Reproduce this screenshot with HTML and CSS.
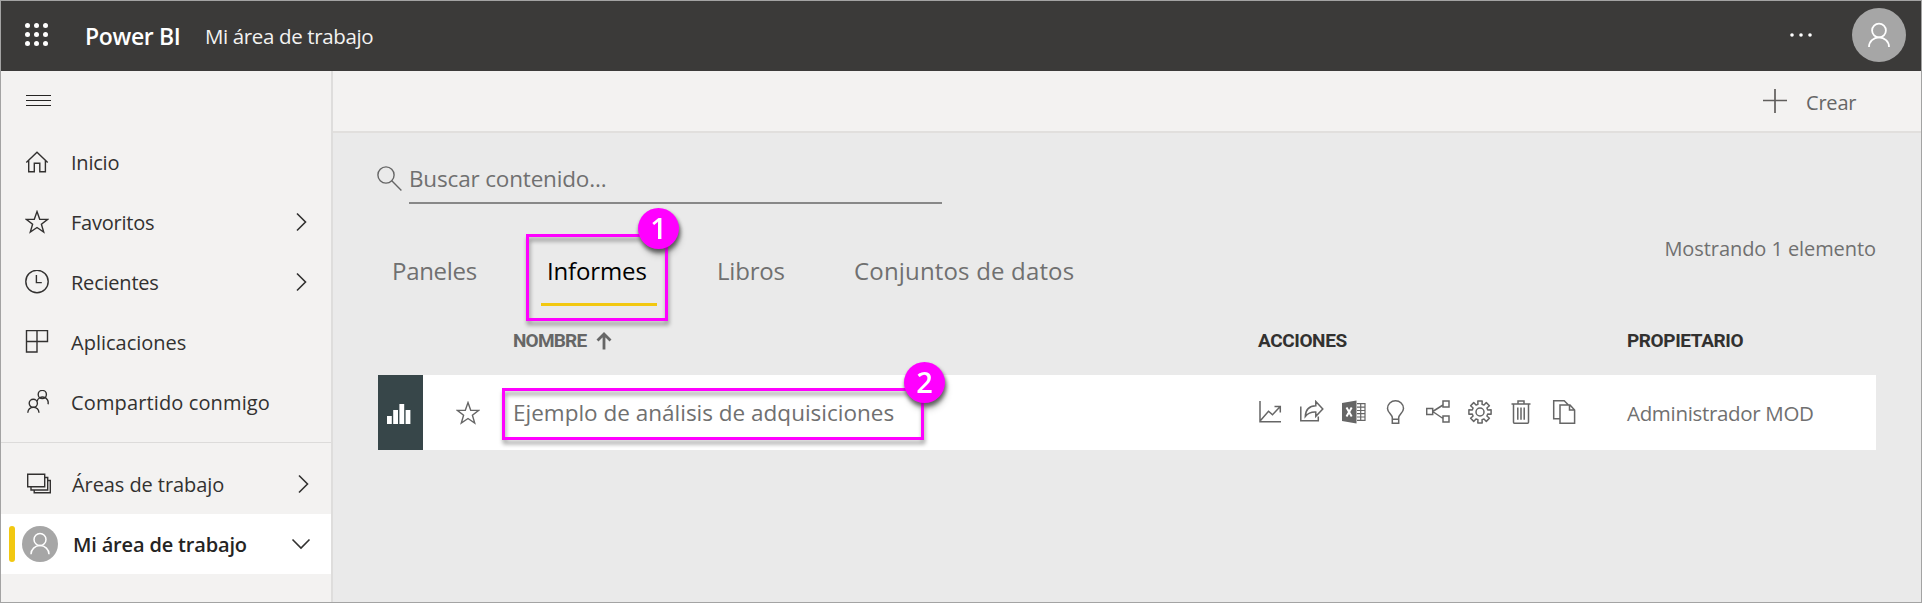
FILE: index.html
```html
<!DOCTYPE html>
<html lang="es">
<head>
<meta charset="utf-8">
<title>Power BI</title>
<link rel="stylesheet" href="styles.css">
</head>
<body>
<div class="app">
  <header class="topbar">
    <svg class="waffle" width="24" height="24" viewBox="0 0 24 24"><g fill="#fff"><circle cx="2.500" cy="2.500" r="2.500"/><circle cx="11.500" cy="2.500" r="2.500"/><circle cx="20.500" cy="2.500" r="2.500"/><circle cx="2.500" cy="11.500" r="2.500"/><circle cx="11.500" cy="11.500" r="2.500"/><circle cx="20.500" cy="11.500" r="2.500"/><circle cx="2.500" cy="20.500" r="2.500"/><circle cx="11.500" cy="20.500" r="2.500"/><circle cx="20.500" cy="20.500" r="2.500"/></g></svg>
    <span class="brand">Power BI</span>
    <span class="crumb">Mi área de trabajo</span>
    <svg class="more" width="24" height="6" viewBox="0 0 24 6"><g fill="#fff"><circle cx="3" cy="3" r="1.800"/><circle cx="12" cy="3" r="1.800"/><circle cx="21" cy="3" r="1.800"/></g></svg>
    <svg class="avatar" width="54" height="54" viewBox="0 0 54 54"><circle cx="27" cy="27" r="27" fill="#a6a6a6"/><g fill="none" stroke="#fff" stroke-width="1.800"><circle cx="27" cy="22.500" r="6.900"/><path d="M17 39a10 9.600 0 0 1 20 0"/></g></svg>
  </header>
  <div class="body">
    <nav class="sidebar">
      <div class="burger"><svg width="25" height="12" viewBox="0 0 25 12"><path d="M0 1.500h25M0 6.500h25M0 11.500h25" stroke="#252423" stroke-width="1"/></svg></div>
      <a class="item"><svg class="ico" width="24" height="24" viewBox="0 0 24 24"><path d="M1.300 12.600 12 2.200l10.700 10.400M3.700 10.800v11h5.600v-8.600h5.500v8.600h5.600v-11"/></svg><span class="t tight">Inicio</span></a>
      <a class="item"><svg class="ico" width="24" height="24" viewBox="0 0 24 24"><path d="M12 1.600l2.700 7.600 8 .2-6.300 4.900 2.300 7.700-6.700-4.500L5.300 22l2.300-7.700L1.300 9.400l8-.2z"/></svg><span class="t tight">Favoritos</span><svg class="chev" width="12" height="20" viewBox="0 0 12 20"><path d="M2 1.500 10.500 10 2 18.500"/></svg></a>
      <a class="item"><svg class="ico" width="24" height="24" viewBox="0 0 24 24"><circle cx="12" cy="11.500" r="11.200"/><path d="M11.400 5v7.600h5.400"/></svg><span class="t tight">Recientes</span><svg class="chev" width="12" height="20" viewBox="0 0 12 20"><path d="M2 1.500 10.500 10 2 18.500"/></svg></a>
      <a class="item"><svg class="ico" width="24" height="24" viewBox="0 0 24 24"><path d="M1.500.5h21v11h-10.500v10.500H1.500zM12 .5v11M1.500 11.500h11"/></svg><span class="t">Aplicaciones</span></a>
      <a class="item"><svg class="ico" width="24" height="24" viewBox="0 0 24 24"><circle cx="17.300" cy="4.500" r="4.100"/><circle cx="8.300" cy="13.300" r="4.100"/><path d="M2.800 22.800a5.600 5.600 0 0 1 11.200 0M12 11.200a5.600 5.600 0 0 1 11 3"/></svg><span class="t loose">Compartido conmigo</span></a>
      <div class="rule"></div>
      <a class="item areas"><svg class="ico stack" width="26" height="24" viewBox="0 0 26 24"><path d="M2.700 2.200h17v12.600h-17zM19.700 5.500h3V18H6V15M22.700 8.500h2.600v12.300H9.200v-2.700"/></svg><span class="t">Áreas de trabajo</span><svg class="chev" width="12" height="20" viewBox="0 0 12 20"><path d="M2 1.500 10.500 10 2 18.500"/></svg></a>
      <a class="item current"><i class="mark"></i><svg width="36" height="36" viewBox="0 0 36 36"><circle cx="18" cy="18" r="18" fill="#a6a6a6"/><g fill="none" stroke="#fff" stroke-width="1.500"><circle cx="18" cy="13.500" r="6"/><path d="M9 28.200a9 8.600 0 0 1 18 0"/></g></svg><span class="t">Mi área de trabajo</span><svg class="down" width="20" height="12" viewBox="0 0 20 12"><path d="M1.500 1.500 10 10l8.500-8.500"/></svg></a>
    </nav>
    <main class="main">
      <div class="toolbar">
        <svg width="24" height="24" viewBox="0 0 24 24"><path d="M0 11.500h24M12 0v24" stroke="#605e5c" stroke-width="1.700"/></svg>
        <span class="create">Crear</span>
      </div>
      <div class="content">
        <div class="search">
          <svg width="25" height="25" viewBox="0 0 25 25"><g fill="none" stroke="#666" stroke-width="1.400"><circle cx="9" cy="9" r="8.100"/><path d="M14.800 14.800l9.600 9.600"/></g></svg>
          <div class="field">Buscar contenido...</div>
        </div>
        <div class="tabs">
          <div class="tab panels">Paneles</div>
          <div class="tab active">Informes<div class="callout c1"><b class="badge">1</b></div></div>
          <div class="tab books">Libros</div>
          <div class="tab sets">Conjuntos de datos</div>
          <div class="count">Mostrando 1 elemento</div>
        </div>
        <div class="grid head">
          <div class="h-name"><span>NOMBRE</span><svg width="16" height="18" viewBox="0 0 16 18"><path d="M8 17.500V2.500M1.500 8.500 8 2l6.500 6.500" fill="none" stroke="#666" stroke-width="2.800"/></svg></div>
          <div>ACCIONES</div>
          <div>PROPIETARIO</div>
        </div>
        <div class="grid row">
          <div class="kind"><svg width="24" height="22" viewBox="0 0 24 22"><path d="M0 13h4.800v8H0zM6.200 7H11v14H6.200zM12.400 1h4.800v20h-4.800zM18.600 7h4.800v14h-4.800z" fill="#fff"/></svg></div>
          <div class="fav"><svg width="24" height="24" viewBox="0 0 24 24"><path d="M12 1.600l2.700 7.600 8 .2-6.300 4.900 2.300 7.700-6.700-4.500L5.300 22l2.300-7.700L1.300 9.400l8-.2z" fill="none" stroke="#666" stroke-width="1.400"/></svg></div>
          <div class="name">Ejemplo de análisis de adquisiciones<div class="callout c2"><b class="badge">2</b></div></div>
          <div class="actions">
            <svg viewBox="0 0 24 24"><path d="M2 1v20.800h21M2.500 20.500 10.500 11.200l4 3.600 7.500-8M16.500 6.500h5.800v6"/></svg>
            <svg viewBox="0 0 24 24"><path d="M.8 6.500v14.200h17.500v-4.200M5.300 16.500C5.600 9.500 9.500 6 15.800 5.800V1.500L22.800 9l-7 7.300v-4.200c-4.300-.2-7.700.9-10.500 4.400z"/></svg>
            <svg viewBox="0 0 24 24"><path d="M0 3 14.500.5v23L0 21z" fill="#666" stroke="none"/><path d="M15 3.700h8v16.600h-8M15 7.200h8M15 10.500h8M15 13.700h8M15 17h8M18.700 3.700v16.600" stroke-width="1.200"/><path d="M4.500 7.500l5.200 9M9.700 7.500l-5.200 9" stroke="#fff" stroke-width="2"/></svg>
            <svg viewBox="0 0 24 24"><path d="M8.300 19.200v-1.700C8.300 14.500 3.500 12.500 3.500 8.400a8 7.600 0 0 1 16 0c0 4.100-4.800 6.100-4.800 9.100v5.700H8.300zM8.300 19.300h6.400"/></svg>
            <svg viewBox="0 0 24 24"><path d="M.7 8.500h6v6h-6zM17 1h6v6h-6zM17 16h6v6h-6zM6.700 11.500 17 5M6.700 11.500 17 18.500"/></svg>
            <svg viewBox="0 0 24 24"><circle cx="12" cy="12" r="4"/><path d="M9.940 4.270 9.820.9h4.360l-.12 3.370 1.950.81 2.300-2.470 3.080 3.080-2.470 2.300.81 1.950 3.370-.12v4.360l-3.370-.12-.81 1.950 2.470 2.300-3.080 3.080-2.300-2.470-1.950.81.12 3.370H9.820l.12-3.370-1.950-.81-2.300 2.470-3.080-3.080 2.470-2.300-.81-1.950-3.370.12V9.820l3.370.12.81-1.950-2.470-2.300 3.080-3.080 2.300 2.470z" stroke-linejoin="round"/></svg>
            <svg viewBox="0 0 24 24"><path d="M1.500 4h19M3.500 4v18.300q0 .9.900.9h13.200q.9 0 .9-.9V4M8 4V1h6v3M7.800 7.500v12.300M11 7.500v12.300M14.200 7.500v12.300"/></svg>
            <svg viewBox="0 0 24 24"><path d="M8 18.700H1.700V.8h10.500l4 4M8 5h10l4.600 5v13.200H8zM17.500 5v5h5"/></svg>
          </div>
          <div class="owner">Administrador MOD</div>
        </div>
      </div>
    </main>
  </div>
</div>
</body>
</html>
```
FILE: styles.css
```css
* { box-sizing: border-box; }
body { margin: 0; font-family: "Open Sans", "Noto Sans", sans-serif; color: #323130; }
svg { display: block; flex: none; }
.app { width: 1922px; height: 603px; border: 1px solid #a3a3a3; background: #eaeaea; display: flex; flex-direction: column; overflow: hidden; white-space: nowrap; }

.topbar { height: 70px; flex: none; background: #3b3a39; color: #fff; display: flex; align-items: center; padding: 0 15px 0 24px; }
.topbar svg { margin-bottom: 2px; }
.brand { margin-left: 36px; width: 120px; font-size: 23px; font-weight: 600; letter-spacing: -.35px; }
.crumb { font-size: 20.5px; letter-spacing: -.37px; color: #f3f2f1; }
.more { margin-left: auto; }
.avatar { margin-left: 39px; }

.body { flex: 1; display: flex; min-height: 0; }
.sidebar { width: 332px; flex: none; background: #f3f2f1; border-right: 2px solid #dedddc; }
.burger { height: 61px; padding: 23px 0 0 25px; }
.item { height: 60px; display: flex; align-items: center; padding: 0 24px 0 24px; font-size: 20px; }
.item .t { margin-left: 22px; }
.tight { letter-spacing: -.22px; }
.loose { letter-spacing: .13px; }
.ico { fill: none; stroke: #323130; stroke-width: 1.4; }
.chev, .down { margin-left: auto; fill: none; stroke: #323130; stroke-width: 1.6; }
.rule { height: 1px; background: #dcdbda; margin: 10px 0 11px; }
.areas { padding-right: 22px; }
.areas .t { margin-left: 21px; letter-spacing: -.08px; }
.current { background: #fff; font-weight: 600; color: #252423; padding: 0 20px 0 8px; }
.mark { width: 6px; height: 36px; border-radius: 3px; background: #f2c811; margin-right: 7px; }
.current .t { margin-left: 15px; letter-spacing: -.17px; }

.main { flex: 1; min-width: 0; }
.toolbar { height: 62px; background: #f3f2f1; border-bottom: 2px solid #e1dfdd; display: flex; align-items: center; padding-left: 1430px; color: #666; }
.create { margin-left: 19px; padding-top: 2px; font-size: 20px; letter-spacing: -.2px; }
.content { padding: 27px 45px 0; color: #707070; }
.search { display: flex; height: 44px; margin-left: -1px; }
.search svg { margin: 6px 7px 0 0; }
.field { width: 533px; border-bottom: 2px solid #888; padding-bottom: 5px; display: flex; align-items: center; font-size: 22.5px; letter-spacing: -.17px; }
.tabs { margin-top: 31px; height: 71px; padding-left: 6px; display: grid; grid-template-columns: 157px 167px 137px 1fr auto; font-size: 24px; }
.tab { position: relative; width: 116px; padding: 3px 0 0 7px; border-bottom: 3px solid transparent; display: flex; align-items: center; }
.panels { padding-left: 8px; letter-spacing: -.3px; }
.active { color: #000; border-bottom-color: #f2c811; padding-left: 6px; letter-spacing: -.15px; }
.books { padding-left: 9px; letter-spacing: -.2px; }
.sets { padding-left: 9px; letter-spacing: .17px; }
.count { font-size: 20px; line-height: 28px; letter-spacing: -.07px; }

.grid { display: grid; grid-template-columns: 45px 90px 745px 369px 249px; align-items: center; }
.head { height: 69px; font-family: Roboto, sans-serif; font-weight: 700; font-size: 19px; letter-spacing: -.4px; color: #323130; }
.h-name { grid-column: 3; display: flex; align-items: center; gap: 10px; color: #666; letter-spacing: -.8px; }
.row { height: 75px; background: #fff; }
.kind { height: 75px; background: #374649; display: flex; align-items: center; padding: 3px 0 0 9px; }
.fav { display: flex; justify-content: center; padding-right: 1px; }
.name { position: relative; font-size: 22.5px; }
.actions { display: flex; gap: 18px; padding-bottom: 1px; }
.actions svg { width: 24px; height: 24px; fill: none; stroke: #666; stroke-width: 1.5; }
.owner { font-size: 20.5px; letter-spacing: -.32px; }

/* Numbered step callouts drawn over the page */
.callout { position: absolute; border: 3px solid #f0f; filter: drop-shadow(1px 4px 2px rgba(0, 0, 0, .4)); }
.c1 { left: -15px; top: -1px; width: 142px; height: 87px; }
.c2 { left: -11px; top: -9px; width: 422px; height: 52px; }
.badge { position: absolute; right: -14px; top: -29px; width: 41px; height: 41px; border-radius: 50%; background: #f0f; color: #fff; font: 600 29px/39px "Open Sans", sans-serif; letter-spacing: 0; text-align: center; filter: drop-shadow(1px 3px 2px rgba(0, 0, 0, .4)); }
.c2 .badge { right: -24px; }
```
